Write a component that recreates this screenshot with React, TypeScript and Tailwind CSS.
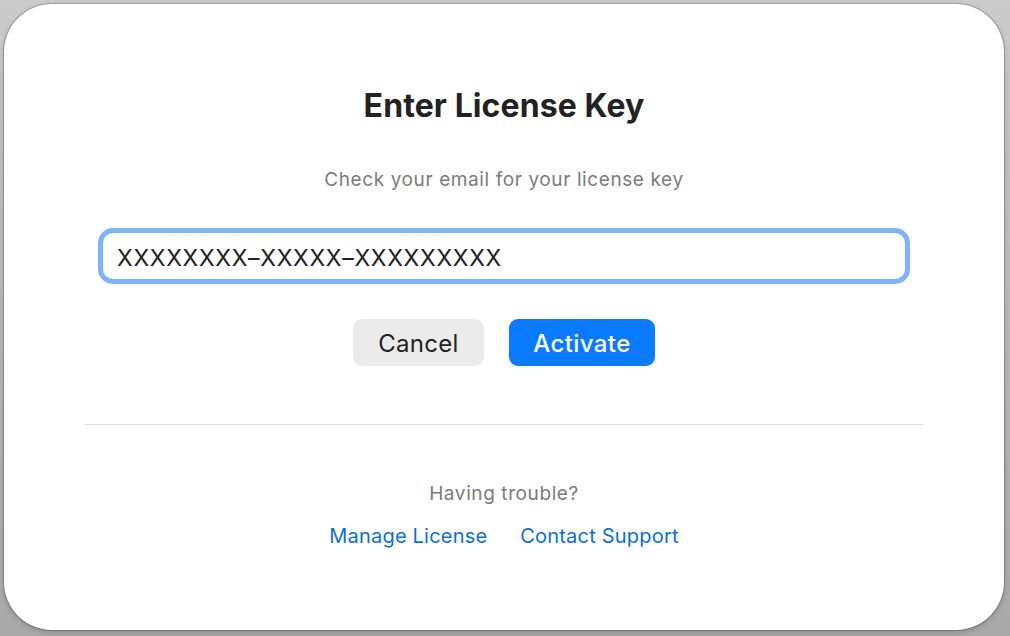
export default function App() {
  return (
    <div
      className="h-[636px] w-[1010px] overflow-hidden bg-gradient-to-b from-[#cbcbcb] to-[#a9a9a9] pl-[4px] pr-[6px] pt-[4px] pb-[6px]"
      style={{ fontFamily: "Inter, 'Noto Sans', sans-serif" }}
    >
      <div className="flex h-full w-full flex-col items-center rounded-[48px] bg-white shadow-[0_0_0_1px_rgba(0,0,0,0.18),0_2px_6px_rgba(0,0,0,0.2)]">
        <h1 className="mt-[84px] text-[32px] font-bold leading-[36px] tracking-[0.1px] text-[#222222]">
          Enter License Key
        </h1>
        <p className="mt-[44px] text-[19px] leading-[24px] tracking-[0.6px] text-[#7b7b7b]">
          Check your email for your license key
        </p>
        <div className="mt-[36px] w-[812px] rounded-[15px] bg-[#7fb3f7] p-[5px]">
          <input
            readOnly
            value="XXXXXXXX–XXXXX–XXXXXXXXX"
            className="h-[46px] w-full rounded-[10px] bg-white px-[14px] pt-[3px] text-[23px] tracking-[0.7px] text-[#222222] outline-none"
            style={{ fontFamily: "Inter, 'Noto Sans', sans-serif" }}
          />
        </div>
        <div className="mt-[35px] flex gap-[25px]">
          <button className="h-[47px] w-[131px] rounded-[9px] bg-[#ebebeb] pt-[2px] text-[24px] tracking-[0.3px] text-[#222222]">
            Cancel
          </button>
          <button className="h-[47px] w-[146px] rounded-[9px] bg-[#0a7aff] pt-[2px] text-[24px] font-medium tracking-[0.4px] text-white">
            Activate
          </button>
        </div>
        <div className="mt-[58px] h-px w-[840px] bg-[#e2e2e2]" />
        <p className="mt-[57px] text-[19px] leading-[24px] tracking-[0.6px] text-[#7b7b7b]">Having trouble?</p>
        <div className="mt-[18px] flex gap-[33px] text-[20px] leading-[24px] tracking-[0.2px] text-[#0a6fdc]">
          <a>Manage License</a>
          <a>Contact Support</a>
        </div>
      </div>
    </div>
  );
}
